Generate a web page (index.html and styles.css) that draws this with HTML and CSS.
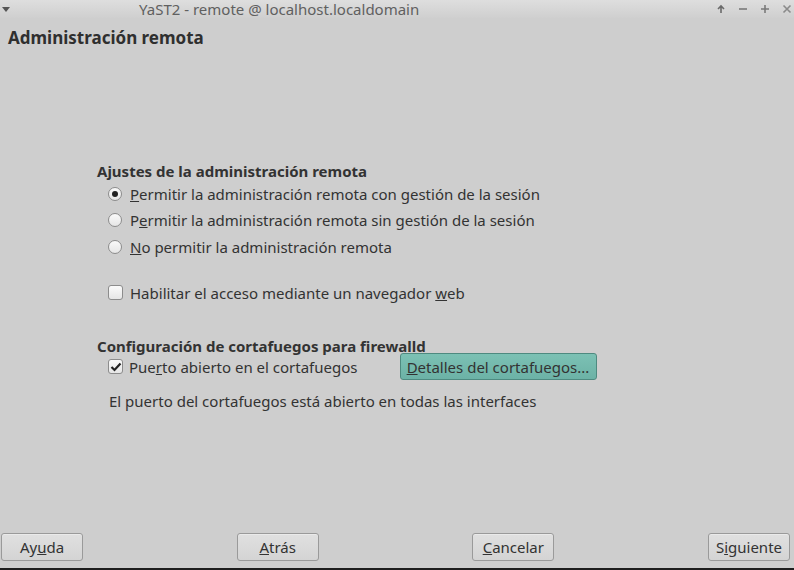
FILE: index.html
```html
<!DOCTYPE html>
<html>
<head>
<meta charset="utf-8">
<link rel="stylesheet" href="styles.css">
</head>
<body>
<div class="window">
  <div class="titlebar">
    <span class="menu-arrow"></span>
    <span class="title">YaST2 - remote @ localhost.localdomain</span>
    <div class="wbtns">
      <svg width="10" height="10" viewBox="0 0 10 10"><path d="M5 9V2M2 5l3-3 3 3" stroke="#6a6a6a" stroke-width="1.6" fill="none"/></svg>
      <svg width="10" height="10" viewBox="0 0 10 10"><path d="M1 5h8" stroke="#7a7a7a" stroke-width="1.6"/></svg>
      <svg width="10" height="10" viewBox="0 0 10 10"><path d="M1 5h8M5 1v8" stroke="#7a7a7a" stroke-width="1.6"/></svg>
      <svg width="10" height="10" viewBox="0 0 10 10"><path d="M1.5 1.5l7 7M8.5 1.5l-7 7" stroke="#8a8a8a" stroke-width="1.6"/></svg>
    </div>
  </div>
  <h1 class="heading">Administración remota</h1>
  <div class="content">
    <div class="group">
      <div class="group-title">Ajustes de la administración remota</div>
      <label class="opt first"><span class="radio checked"></span><span><u>P</u>ermitir la administración remota con gestión de la sesión</span></label>
      <label class="opt"><span class="radio"></span><span>P<u>e</u>rmitir la administración remota sin gestión de la sesión</span></label>
      <label class="opt"><span class="radio"></span><span><u>N</u>o permitir la administración remota</span></label>
    </div>
    <label class="opt web"><span class="check"></span><span>Habilitar el acceso mediante un navegador <u>w</u>eb</span></label>
    <div class="group fw">
      <div class="group-title">Configuración de cortafuegos para firewalld</div>
      <div class="fw-row">
        <label class="opt"><span class="check checked"><svg width="12" height="10" viewBox="0 0 12 10"><path d="M1.5 5l3 3 6-6.5" stroke="#222" stroke-width="2.2" fill="none"/></svg></span><span>Pue<u>r</u>to abierto en el cortafuegos</span></label>
        <button class="btn teal"><u>D</u>etalles del cortafuegos...</button>
      </div>
      <div class="note">El puerto del cortafuegos está abierto en todas las interfaces</div>
    </div>
  </div>
  <div class="bottom">
    <button class="btn">Ay<u>u</u>da</button>
    <button class="btn"><u>A</u>trás</button>
    <button class="btn"><u>C</u>ancelar</button>
    <button class="btn">S<u>i</u>guiente</button>
  </div>
</div>
</body>
</html>
```
FILE: styles.css
```css
* { box-sizing: border-box; }
html, body { margin: 0; padding: 0; }
body {
  width: 794px; height: 570px; overflow: hidden;
  background: #cecece;
  font-family: "Noto Sans", "Open Sans", sans-serif;
  color: #333;
  font-size: 15px;
}
.window {
  height: 570px;
  display: flex; flex-direction: column;
  border-bottom: 2px solid #1e1e1e;
}
.titlebar {
  height: 18px; flex: none;
  background: linear-gradient(#dedede, #cfcfcf);
  display: flex; align-items: center;
}
.menu-arrow {
  width: 0; height: 0; margin-left: 2px;
  border-left: 4px solid transparent; border-right: 4px solid transparent;
  border-top: 5px solid #555;
}
.title {
  margin-left: 129px;
  color: #606060;
  font-size: 15px;
  line-height: 18px;
}
.wbtns {
  margin-left: auto; margin-right: 2px;
  display: flex; gap: 12px; align-items: center;
}
.heading {
  margin: 9px 0 0 8px;
  font-size: 17px; font-weight: bold; color: #2f2f2f;
  line-height: 22px;
}
.content {
  padding-left: 97px;
  margin-top: 112px;
  flex: 1;
}
.group-title { font-weight: bold; line-height: 20px; height: 20px; color: #333; }
.opt {
  display: flex; align-items: center; gap: 8px;
  margin-left: 11px; height: 27px; line-height: 20px;
}
.opt.first { height: 25px; }
.radio {
  width: 14px; height: 14px; border-radius: 50%;
  border: 1px solid #8c8c8c;
  background: linear-gradient(#fafafa, #e6e6e6);
  display: inline-flex; align-items: center; justify-content: center;
  flex: none;
}
.radio.checked::after {
  content: ""; width: 6px; height: 6px; border-radius: 50%; background: #222;
}
.check {
  width: 15px; height: 15px; border-radius: 3px;
  border: 1px solid #8c8c8c;
  background: linear-gradient(#fafafa, #e6e6e6);
  display: inline-flex; align-items: center; justify-content: center;
  flex: none;
}
.web { margin-top: 19px; gap: 7px; }
.fw { margin-top: 30px; }
.fw-row { display: flex; align-items: center; height: 27px; margin-top: -3px; }
.fw-row .opt { margin-left: 11px; gap: 6px; }
.btn {
  font-family: inherit; font-size: 15px; color: #333;
  height: 28px; width: 82px; padding: 0;
  border: 1px solid #9a9a9a; border-radius: 3px;
  background: linear-gradient(#e0e0e0, #d4d4d4);
  box-shadow: inset 0 1px 0 #eaeaea;
}
.btn.teal {
  width: 197px; height: 27px; margin-left: 42px;
  background: linear-gradient(#7cc1b4, #6cb2a6);
  border-color: #4e8a80;
  box-shadow: none;
}
.note { margin: 11px 0 0 12px; line-height: 20px; }
.bottom {
  display: flex; justify-content: space-between;
  padding: 0 4px 0 1px;
  margin-bottom: 7px;
}
```
